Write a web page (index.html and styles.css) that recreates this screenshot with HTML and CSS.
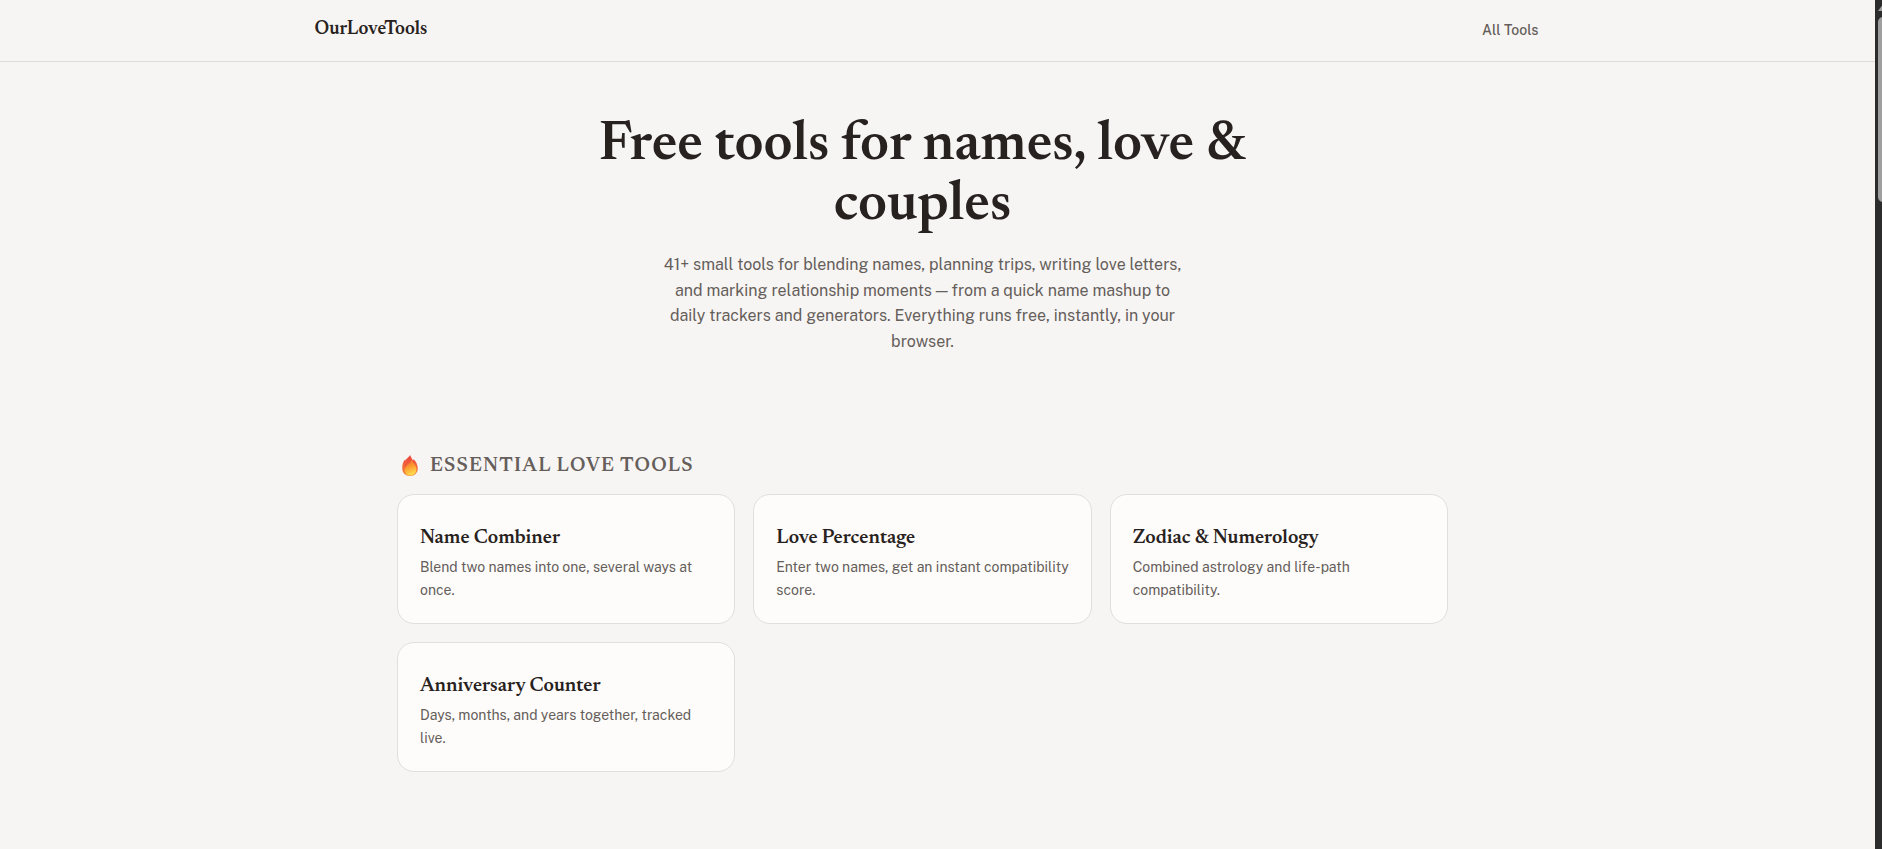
FILE: index.html
```
<!DOCTYPE html>
<html lang="en">
<head>
    <meta charset="UTF-8">
    <meta name="viewport" content="width=device-width, initial-scale=1.0">
    <title>OurLoveTools</title>
    <link rel="stylesheet" href="styles.css">
</head>
<body>
    <header class="site-header">
        <div class="header-inner">
            <a class="logo" href="/">OurLoveTools</a>
            <nav>
                <a class="nav-link" href="/tools">All Tools</a>
            </nav>
        </div>
    </header>
    <main>
        <section class="hero">
            <h1>Free tools for names, love &amp; couples</h1>
            <p>41+ small tools for blending names, planning trips, writing love letters, and marking relationship moments — from a quick name mashup to daily trackers and generators. Everything runs free, instantly, in your browser.</p>
        </section>
        <section class="category">
            <h2>
                <svg class="flame" viewBox="0 0 16 21" aria-hidden="true">
                    <defs>
                        <linearGradient id="outer" x1="0" y1="0" x2="0" y2="1">
                            <stop offset="0" stop-color="#ea3f3c"/>
                            <stop offset="0.5" stop-color="#f4673c"/>
                            <stop offset="1" stop-color="#f58a35"/>
                        </linearGradient>
                        <linearGradient id="inner" x1="0" y1="0" x2="0.3" y2="1">
                            <stop offset="0" stop-color="#f0603a"/>
                            <stop offset="0.5" stop-color="#fa962e"/>
                            <stop offset="1" stop-color="#ffd84d"/>
                        </linearGradient>
                    </defs>
                    <path fill="url(#outer)" d="M8.2 0C8.6 2 10.2 3.4 10.8 5.6L11.8 4.2C14 6.6 15.8 9.6 15.8 13.6C15.8 18.2 12.4 21 8.2 21C3.6 21 0.2 18.2 0.2 13C0.2 9 1.2 6.6 3.4 4.2L3.6 5.6C4.4 3.2 7 2.4 8.2 0Z"/>
                    <path fill="url(#inner)" d="M9.8 4.4C10.2 7.6 14.4 10 14.4 14.6C14.4 18.4 11.4 20.6 8.4 20.6C4.8 20.6 2.6 18.2 2.6 14.8C2.6 10.4 9 9 9.8 4.4Z"/>
                    <path fill="none" stroke="#e8503a" stroke-width="0.8" d="M2.8 12.4C3.2 8.6 6.8 7.4 7.8 3.6"/>
                </svg>
                Essential Love Tools
            </h2>
            <div class="tool-grid">
                <a class="tool-card" href="/name-combiner">
                    <h3>Name Combiner</h3>
                    <p>Blend two names into one, several ways at once.</p>
                </a>
                <a class="tool-card" href="/love-percentage">
                    <h3>Love Percentage</h3>
                    <p>Enter two names, get an instant compatibility score.</p>
                </a>
                <a class="tool-card" href="/zodiac-numerology">
                    <h3>Zodiac &amp; Numerology</h3>
                    <p>Combined astrology and life-path compatibility.</p>
                </a>
                <a class="tool-card" href="/anniversary-counter">
                    <h3>Anniversary Counter</h3>
                    <p>Days, months, and years together, tracked live.</p>
                </a>
            </div>
        </section>
    </main>
    <div class="scroll-track" aria-hidden="true">
        <div class="scroll-arrow"></div>
        <div class="scroll-thumb"></div>
    </div>
</body>
</html>
```

FILE: styles.css
```
* {
    box-sizing: border-box;
}
body {
    margin: 0;
    padding-right: 7px;
    background-color: #f7f5f3;
    color: #272120;
    font-family: "Public Sans", Inter, sans-serif;
}
h1, h2, h3, p {
    margin: 0;
}
a {
    color: inherit;
    text-decoration: none;
}
h1, h2, h3, .logo {
    font-family: Newsreader, "Liberation Serif", serif;
    font-weight: 600;
}
.site-header {
    border-bottom: 1px solid #dedbd8;
    padding-right: 22px;
}
.header-inner {
    display: flex;
    align-items: center;
    justify-content: space-between;
    max-width: 1224px;
    height: 61px;
    margin: 0 auto;
}
.header-inner nav,
.logo {
    padding-bottom: 2px;
}
.logo {
    font-size: 19px;
}
.nav-link {
    color: #655e5b;
    font-size: 14px;
    font-weight: 500;
}
main {
    padding: 54px 30px 40px 0;
}
.hero {
    max-width: 680px;
    margin: 0 auto;
    text-align: center;
}
.hero h1 {
    font-size: 56px;
    line-height: 60px;
}
.hero p {
    max-width: 530px;
    margin: 16px auto 0;
    color: #655e5b;
    font-size: 16px;
    line-height: 1.6;
}
.category {
    max-width: 1051px;
    margin: 98px auto 0;
}
.category h2 {
    display: flex;
    align-items: center;
    gap: 12px;
    padding-left: 5px;
    color: #655e5b;
    font-size: 20px;
    line-height: 28px;
    letter-spacing: 0.06em;
    text-transform: uppercase;
}
.flame {
    width: 16px;
    height: 21px;
    margin-bottom: 2px;
}
.tool-grid {
    display: grid;
    grid-template-columns: repeat(3, 1fr);
    gap: 18px;
    margin-top: 14px;
}
.tool-card {
    min-height: 130px;
    padding: 29px 22px 20px;
    background-color: #fdfcfa;
    border: 1px solid #e1dedb;
    border-radius: 17px;
}
.tool-card:hover {
    border-color: #c9c4c0;
}
.tool-card h3 {
    font-size: 20px;
    line-height: 28px;
}
.tool-card p {
    margin-top: 4px;
    color: #655e5b;
    font-size: 14px;
    line-height: 23px;
}
/* scroll bar at the right edge */
.scroll-track {
    position: fixed;
    top: 0;
    right: 0;
    bottom: 0;
    width: 7px;
    overflow: hidden;
    background-color: #2c2c2c;
}
.scroll-arrow {
    width: 10px;
    height: 7px;
    margin: 4px 0 0 3px;
    background-color: #9f9f9f;
    clip-path: polygon(50% 0, 100% 100%, 0 100%);
}
.scroll-thumb {
    width: 10px;
    height: 185px;
    margin: 6px 0 0 3px;
    background-color: #9f9f9f;
    border-radius: 5px;
}
```
